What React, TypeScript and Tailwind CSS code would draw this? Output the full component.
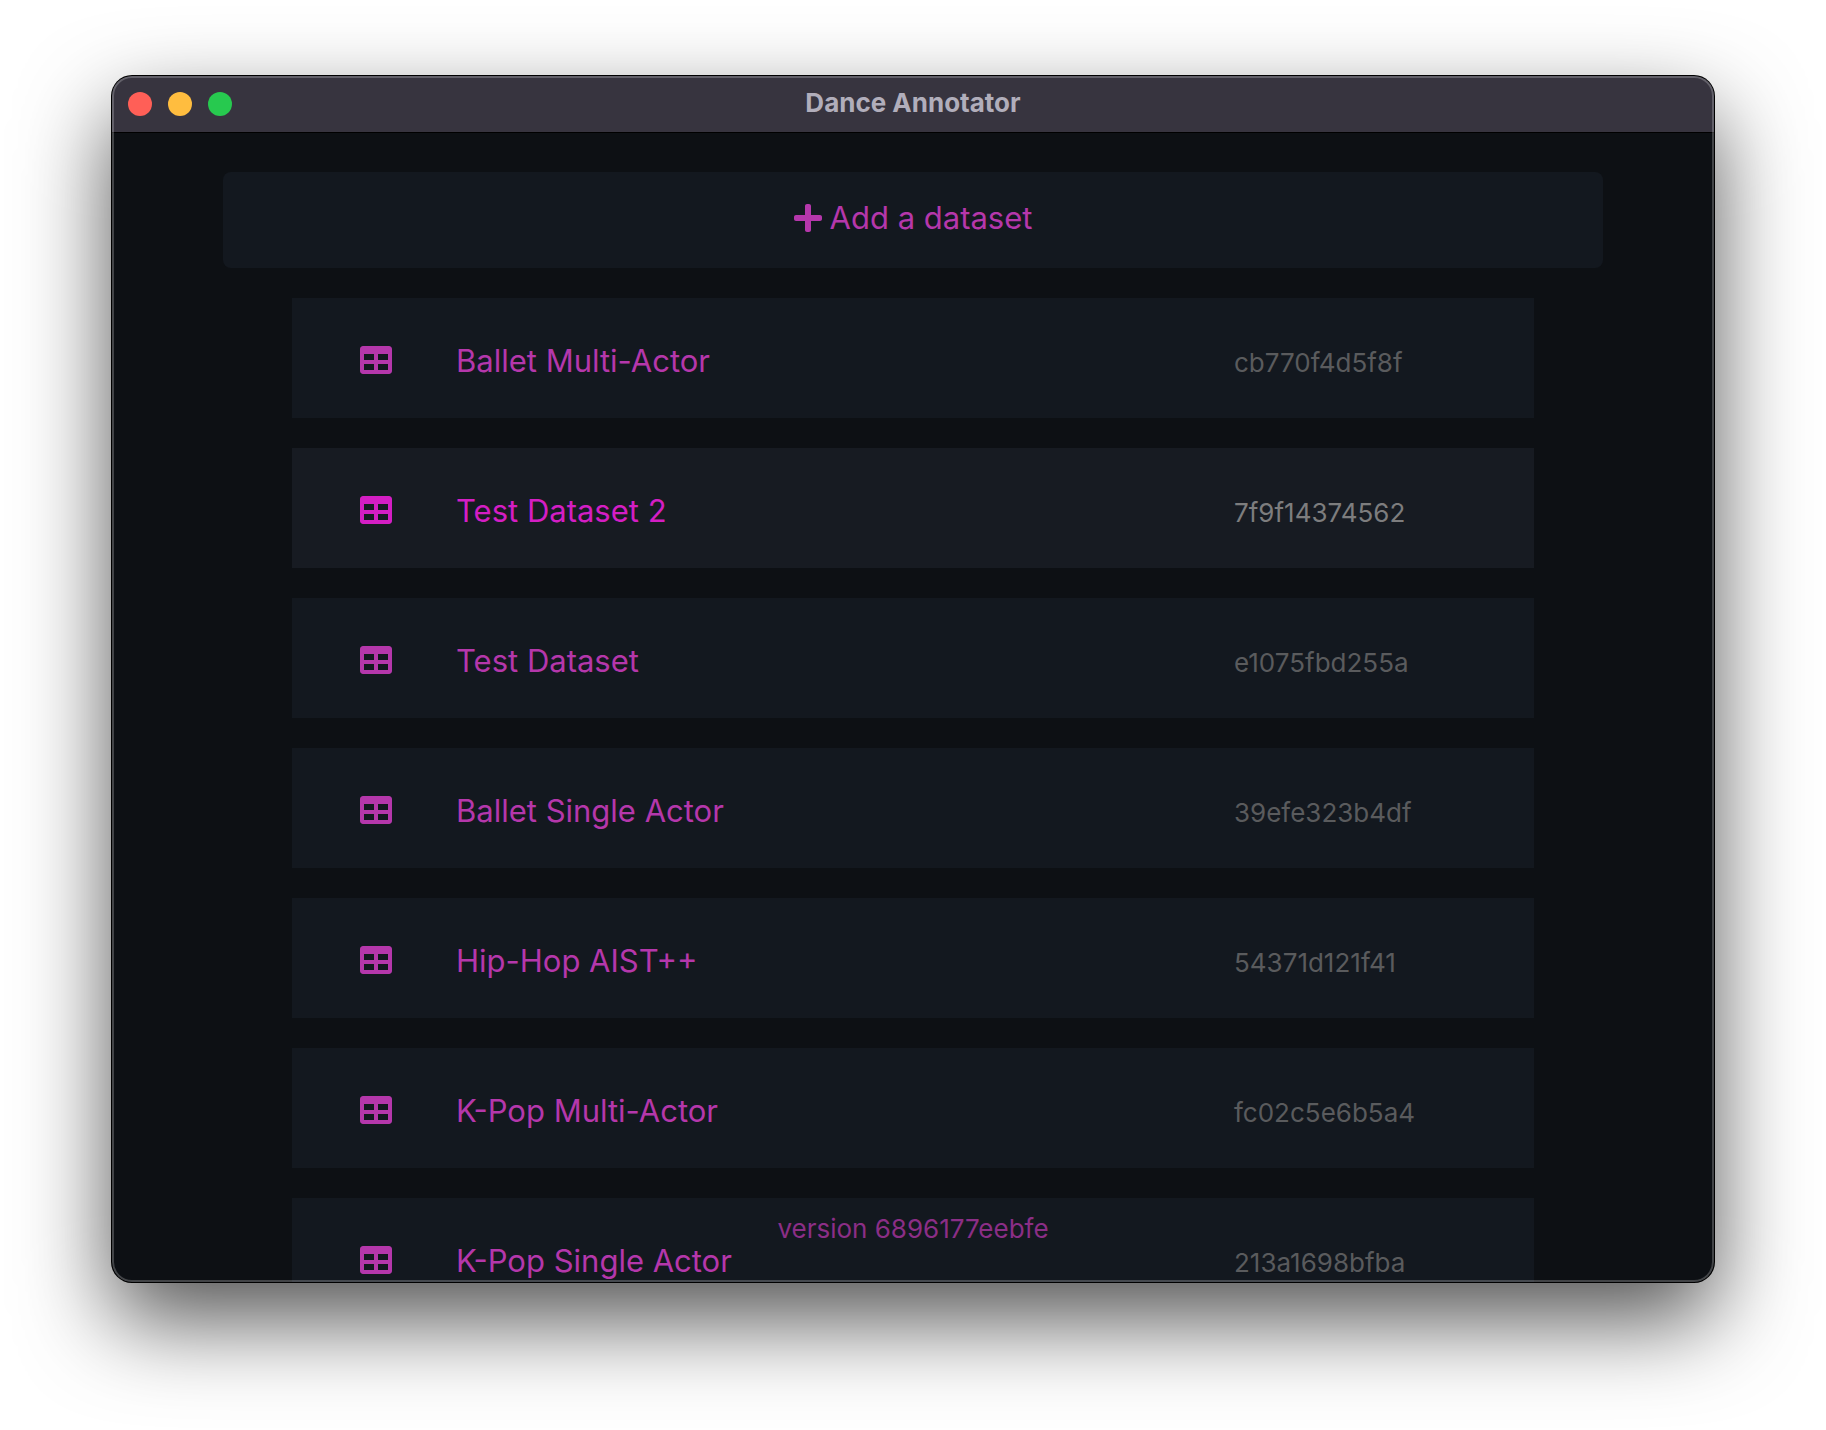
import { FaPlus, FaTable } from "react-icons/fa";

type Dataset = { name: string; hash: string; active?: boolean };

const datasets: Dataset[] = [
  { name: "Ballet Multi-Actor", hash: "cb770f4d5f8f" },
  { name: "Test Dataset 2", hash: "7f9f14374562", active: true },
  { name: "Test Dataset", hash: "e1075fbd255a" },
  { name: "Ballet Single Actor", hash: "39efe323b4df" },
  { name: "Hip-Hop AIST++", hash: "54371d121f41" },
  { name: "K-Pop Multi-Actor", hash: "fc02c5e6b5a4" },
  { name: "K-Pop Single Actor", hash: "213a1698bfba" },
];

function TitleBar() {
  return (
    <header className="relative flex h-14 shrink-0 items-center justify-center bg-[#37343f]">
      <div className="absolute left-4 flex gap-4">
        <button aria-label="Close" className="size-6 rounded-full bg-[#ff5f57]" />
        <button aria-label="Minimize" className="size-6 rounded-full bg-[#ffbd3f]" />
        <button aria-label="Zoom" className="size-6 rounded-full bg-[#27c94f]" />
      </div>
      <h1 className="pb-0.5 text-[26px] leading-8 font-bold text-[#b1aebb]">Dance Annotator</h1>
    </header>
  );
}

function DatasetRow({ name, hash, active }: Dataset) {
  return (
    <li>
      <button
        className={
          active
            ? "flex h-[120px] w-full items-center gap-16 bg-[#171b22] pt-1 pl-[68px] text-left text-[#d41ec4]"
            : "flex h-[120px] w-full items-center gap-16 bg-[#13181f] pt-1 pl-[68px] text-left text-[#b537ab]"
        }
      >
        <FaTable className="size-8 shrink-0" />
        <span className="flex flex-1 items-baseline pt-0.5">
          <span className="flex-1 text-[31px] leading-10">{name}</span>
          <span
            className={
              active
                ? "w-[300px] text-[26px] leading-8 text-[#7d7d7e]"
                : "w-[300px] text-[26px] leading-8 text-[#5a5b5d]"
            }
          >
            {hash}
          </span>
        </span>
      </button>
    </li>
  );
}

export default function App() {
  return (
    <div className="flex h-screen bg-white px-28 pt-19 pb-37 font-['Inter',sans-serif]">
      <div className="relative flex flex-1 flex-col overflow-hidden rounded-[20px] bg-[#0d1014] shadow-[0_0_0_1px_#000,0_38px_90px_rgba(0,0,0,0.68)]">
        <TitleBar />
        <main className="min-h-0 flex-1 overflow-hidden border-t border-black px-[111px] pt-[39px]">
          <button className="flex h-24 w-full items-center justify-center gap-2 rounded-lg bg-[#13181f] pb-1 text-[31px] leading-10 text-[#b537ab]">
            <FaPlus className="h-8 w-7" />
            Add a dataset
          </button>
          <ul className="mx-auto mt-[30px] flex w-9/10 flex-col gap-[30px]">
            {datasets.map((d) => (
              <DatasetRow key={d.hash} {...d} />
            ))}
          </ul>
        </main>
        <p className="absolute inset-x-0 bottom-[37px] text-center text-[26px] leading-8 text-[#8b2e86]">
          version 6896177eebfe
        </p>
        <div className="pointer-events-none absolute inset-0 rounded-[20px] border-2 border-white/22" />
      </div>
    </div>
  );
}
